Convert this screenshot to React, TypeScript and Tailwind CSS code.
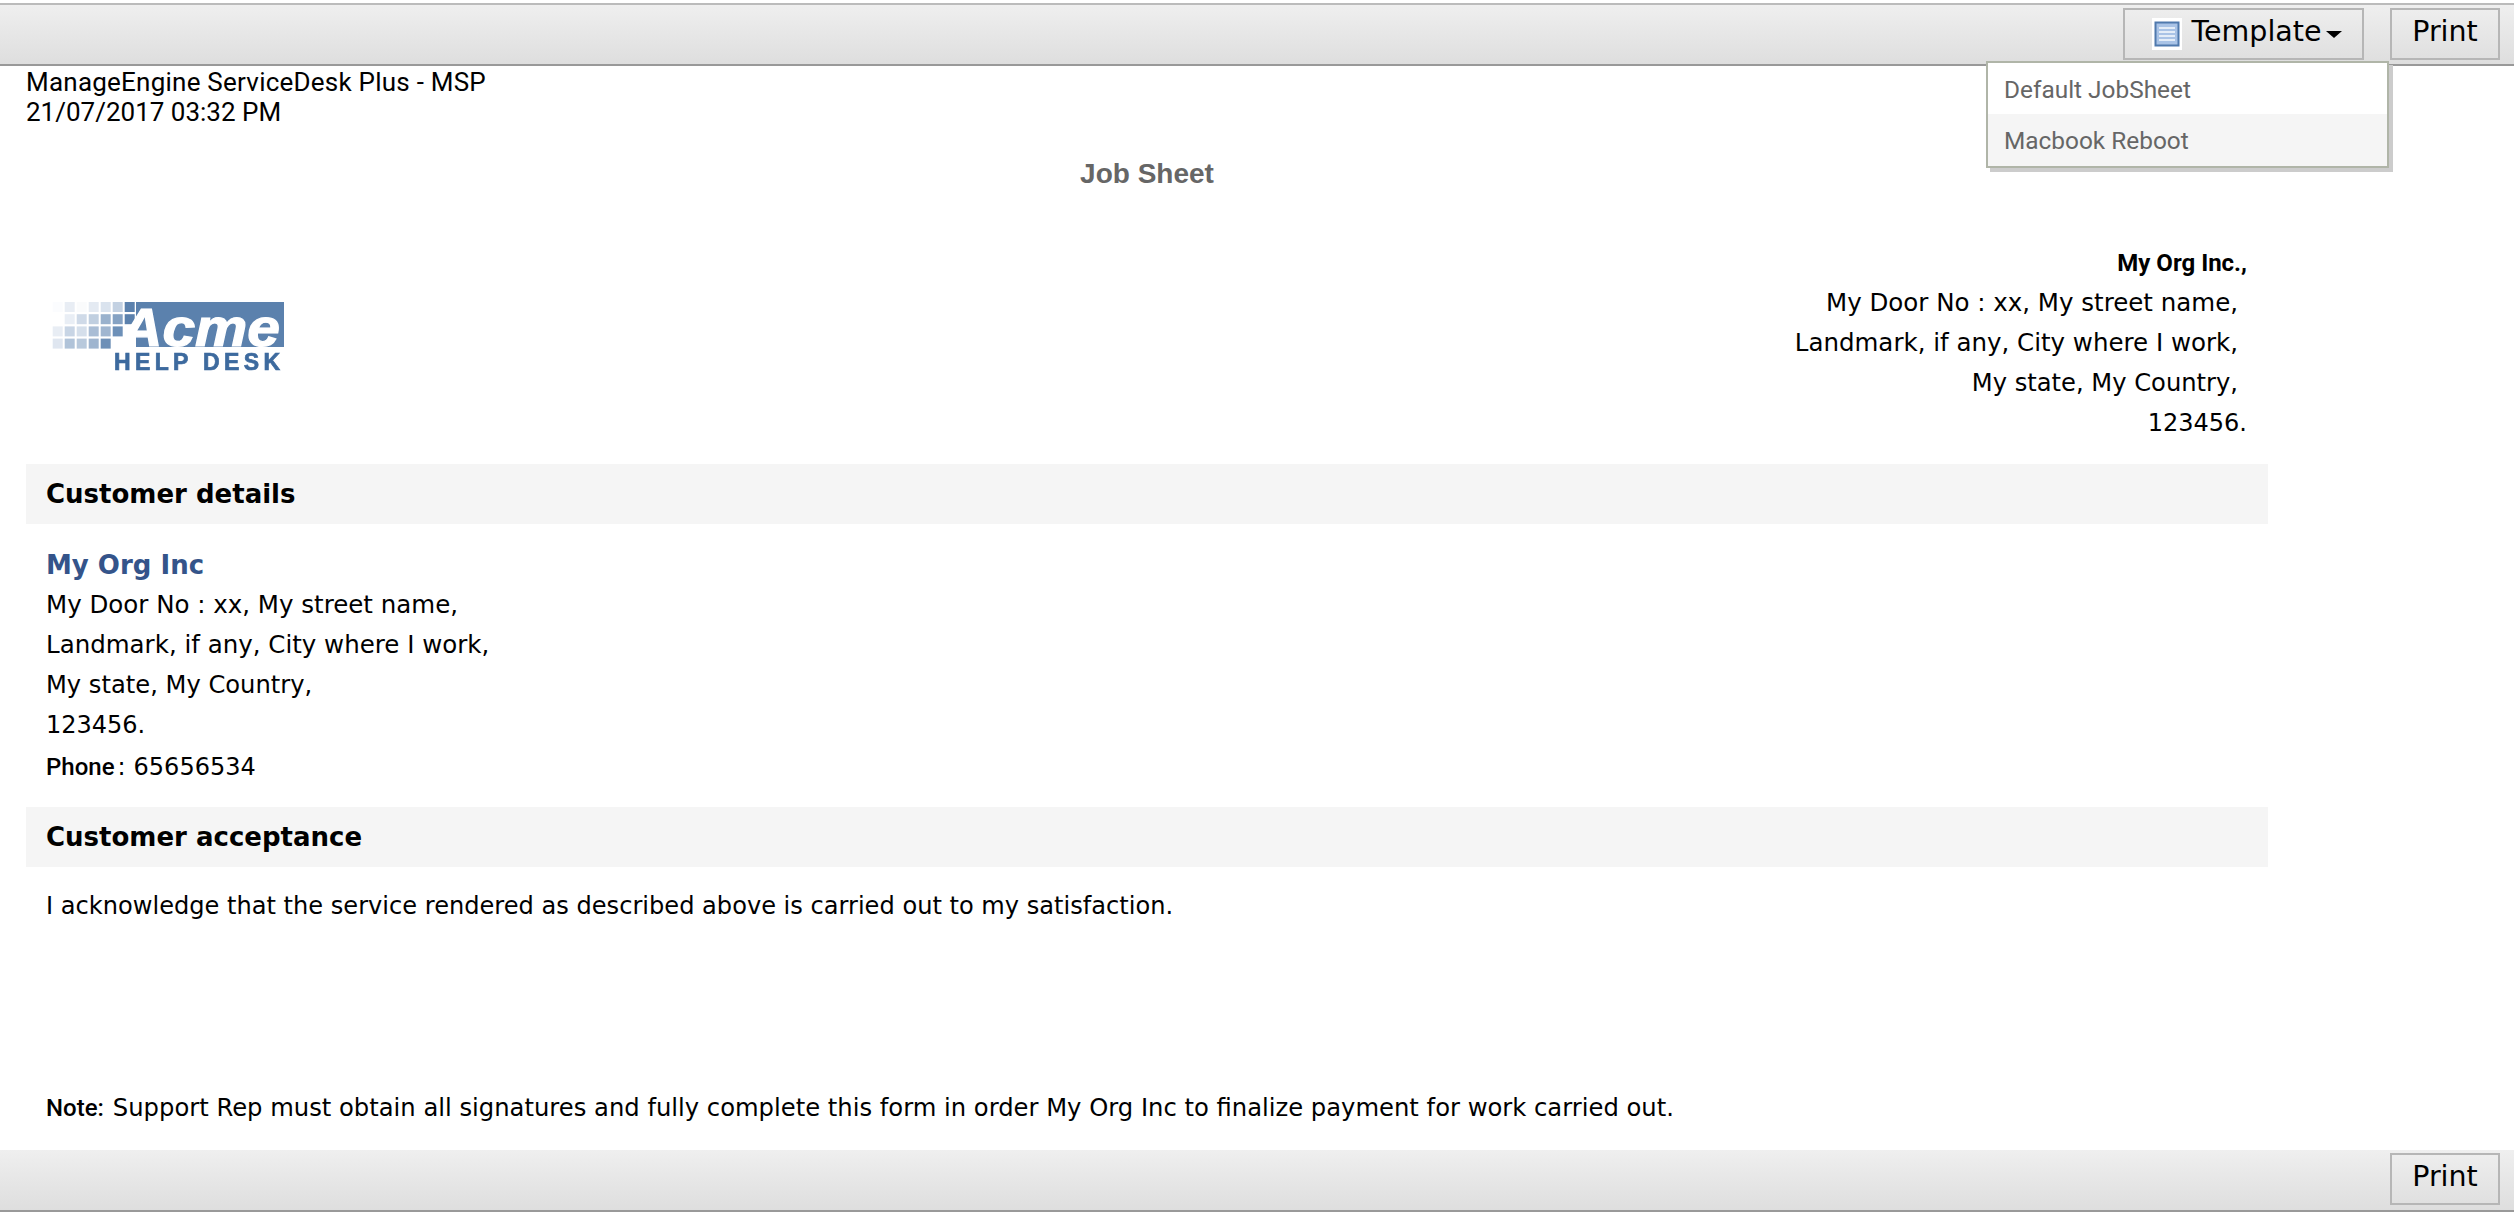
const ROBOTO = "font-['Roboto',sans-serif]"

const SQUARES: [number, number, string][] = [
  [0, 0, "#fbfcfe"], [1, 0, "#e8edf4"], [2, 0, "#fafbfc"], [3, 0, "#e4eaf2"], [4, 0, "#dae3ee"], [5, 0, "#c3d1e2"], [6, 0, "#5b81ad"],
  [1, 1, "#e9eef5"], [2, 1, "#cfdae8"], [3, 1, "#c0cfe0"], [4, 1, "#9ab2cd"], [5, 1, "#85a2c3"], [6, 1, "#5b81ad"],
  [0, 2, "#e8edf4"], [1, 2, "#c8d5e5"], [2, 2, "#d5dfeb"], [3, 2, "#a9bdd5"], [4, 2, "#a0b6d0"], [5, 2, "#6d90b8"],
  [0, 3, "#dfe6f0"], [1, 3, "#b0c3d9"], [2, 3, "#b8c9dc"], [3, 3, "#9fb5cf"], [4, 3, "#6e90b7"],
]

function AcmeLogo() {
  return (
    <svg width="233" height="68" viewBox="0 0 233 68" overflow="visible" className="blur-[0.5px]">
      {SQUARES.map(([c, r, fill]) => (
        <rect key={`${c}-${r}`} x={0.7 + c * 12} y={r * 12.2} width="10" height="10" fill={fill} />
      ))}
      <rect x="84" y="0" width="148" height="45" fill="#5b81ad" />
      <text x="68" y="44" fontFamily="Liberation Sans" fontWeight="700" fontStyle="italic" fontSize="54" fill="#fff" stroke="#fff" strokeWidth="1.2" textLength="160" lengthAdjust="spacingAndGlyphs">
        Acme
      </text>
      <text x="62" y="68" fontFamily="Liberation Sans" fontWeight="700" fontSize="23" fill="#3d6a9e" stroke="#3d6a9e" strokeWidth="0.7" textLength="166">
        HELP DESK
      </text>
    </svg>
  )
}

function TemplateIcon() {
  return (
    <svg width="30" height="32" viewBox="0 0 30 32" className="mr-[9px] mt-[3px]">
      <rect width="30" height="32" fill="#fff" />
      <rect x="3.5" y="4.5" width="23" height="23" fill="#a9c3e6" stroke="#4f79ad" strokeWidth="2" />
      <path d="M7 10h16M7 14h16M7 18h16M7 22h16" stroke="#e4edf8" strokeWidth="2" />
    </svg>
  )
}

function ToolButton({ className, children }: { className: string; children: React.ReactNode }) {
  return (
    <button className={`flex h-[52px] items-center justify-center border-2 border-[#b6b6b6] pb-[3px] font-['DejaVu_Sans',sans-serif] text-[28.5px] text-black ${className}`}>
      {children}
    </button>
  )
}

function SectionBar({ title }: { title: string }) {
  return (
    <div className="flex h-[60px] w-[2242px] items-center bg-[#f5f5f5] pl-[20px] font-['DejaVu_Sans',sans-serif] text-[26px] font-bold text-black">
      {title}
    </div>
  )
}

export default function App() {
  const body = "font-['DejaVu_Sans',sans-serif] text-[24px] leading-[40px] text-black"
  const addr = "text-[24.5px]"

  return (
    <div className="relative flex h-[1216px] w-[2514px] flex-col overflow-hidden bg-white">
      {/* top toolbar */}
      <div className="mt-[3px] flex h-[63px] shrink-0 items-start justify-end border-t-2 border-b-2 border-t-[#bbbbbb] border-b-[#999999] bg-gradient-to-b from-[#efefef] to-[#dedede] pt-[3px] pr-[14px]">
        <ToolButton className="mr-[26px] w-[241px] pl-[7px]">
          <TemplateIcon />
          <span>Template</span>
          <span className="ml-[4px] mt-[3px] h-0 w-0 border-x-[8px] border-t-[7px] border-x-transparent border-t-black" />
        </ToolButton>
        <ToolButton className="w-[110px]">Print</ToolButton>
      </div>

      {/* template menu */}
      <div className="absolute left-[1986px] top-[61px] w-[403px] border-2 border-[#b0b5a8] bg-white font-['Roboto',sans-serif] text-[24.4px] text-[#666666] shadow-[4px_4px_0_#cccccc]">
        <div className="flex h-[51px] items-center pl-[16px] pt-[3px]">Default JobSheet</div>
        <div className="flex h-[52px] items-center bg-[#f5f5f5] pl-[16px] pt-[2px]">Macbook Reboot</div>
      </div>

      <main className="flex min-h-0 flex-1 flex-col pl-[26px]">
        <div className={`${ROBOTO} mt-[1px] text-[26px] leading-[30px] text-black`}>
          <div className="tracking-[0.23px]">ManageEngine ServiceDesk Plus - MSP</div>
          <div>21/07/2017 03:32 PM</div>
        </div>

        <div className="mt-[27px] w-[2242px] text-center font-['Liberation_Sans',sans-serif] text-[28px] font-bold leading-[40px] text-[#666666]">
          Job Sheet
        </div>

        <div className="mt-[49px] flex h-[221px] w-[2242px] justify-between pr-[21px]">
          <div className="pl-[26px] pt-[59px]">
            <AcmeLogo />
          </div>
          <div className={`${body} text-right`}>
            <div className={`${ROBOTO} font-bold`}>My Org Inc.,</div>
            <div className={`${addr} pr-[9px]`}>My Door No : xx, My street name,</div>
            <div className={`${addr} pr-[9px]`}>Landmark, if any, City where I work,</div>
            <div className="pr-[9px] text-[24.2px]">My state, My Country,</div>
            <div>123456.</div>
          </div>
        </div>

        <SectionBar title="Customer details" />

        <div className={`${body} mt-[21px] pl-[20px]`}>
          <div className="text-[26px] font-bold text-[#34548a]">My Org Inc</div>
          <div className={addr}>My Door No : xx, My street name,</div>
          <div className={addr}>Landmark, if any, City where I work,</div>
          <div className="text-[24.2px]">My state, My Country,</div>
          <div>123456.</div>
          <div className="mt-[2px] flex">
            <span className={`${ROBOTO} font-medium`}>Phone</span>
            <span className="ml-[3px]">:</span>
            <span className="ml-[8px]">65656534</span>
          </div>
        </div>

        <div className="mt-[20px]">
          <SectionBar title="Customer acceptance" />
        </div>

        <div className={`${body} mt-[19px] pl-[20px]`}>
          <span className="text-[24.1px]">I acknowledge that the service rendered as described above is carried out to my satisfaction.</span>
        </div>

        <div className={`${body} mt-[162px] flex pl-[20px]`}>
          <span className={`${ROBOTO} mr-[9px] font-medium`}>Note:</span>
          <span className="text-[24.25px]">Support Rep must obtain all signatures and fully complete this form in order My Org Inc to finalize payment for work carried out.</span>
        </div>
      </main>

      {/* bottom toolbar */}
      <div className="mb-[4px] flex h-[62px] shrink-0 items-start justify-end border-b-2 border-b-[#999999] bg-gradient-to-b from-[#efefef] to-[#dedede] pt-[3px] pr-[14px]">
        <ToolButton className="w-[110px]">Print</ToolButton>
      </div>
    </div>
  )
}
